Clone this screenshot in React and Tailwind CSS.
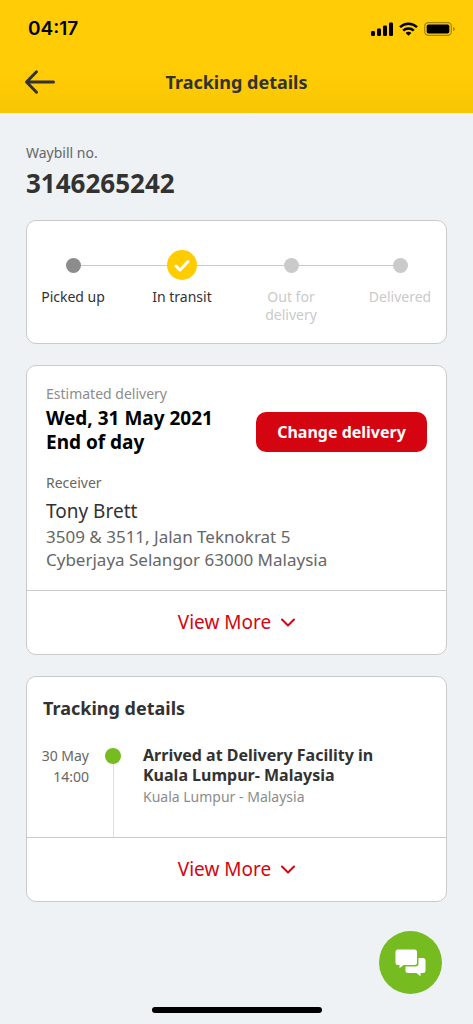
import { clsx } from 'clsx';

const steps = [
  { label: 'Picked up', state: 'done' },
  { label: 'In transit', state: 'current' },
  { label: 'Out for delivery', state: 'pending' },
  { label: 'Delivered', state: 'pending' },
];

const StatusBar = () => (
  <div className="flex h-[58px] items-center justify-between pl-7 pr-[18px] text-black">
    <span className="font-[Inter,sans-serif] text-[19px] font-semibold">04:17</span>
    <div className="flex items-center gap-1.5">
      <svg width="22" height="14" viewBox="0 0 22 14" fill="currentColor" aria-hidden="true">
        <rect x="0" y="9" width="4" height="5" rx="1.2" />
        <rect x="6" y="6.5" width="4" height="7.5" rx="1.2" />
        <rect x="12" y="3.5" width="4" height="10.5" rx="1.2" />
        <rect x="18" y="0.5" width="4" height="13.5" rx="1.2" />
      </svg>
      <svg width="19" height="14" viewBox="0 0 19 14" fill="none" stroke="currentColor" strokeWidth="2.5" aria-hidden="true">
        <path d="M1 5.1C5.8 0.5 13.2 0.5 18 5.1" />
        <path d="M4.2 8.7c3-2.8 7.6-2.8 10.6 0" />
        <path d="M6.6 10.9c1.6-1.5 4.2-1.5 5.8 0L9.5 13.8Z" fill="currentColor" stroke="none" />
      </svg>
      <svg width="31" height="14" viewBox="0 0 31 14" aria-hidden="true">
        <rect x="0.7" y="0.7" width="26.6" height="12.6" rx="3.6" fill="none" stroke="#000" strokeOpacity="0.35" strokeWidth="1.2" />
        <rect x="2.7" y="2.5" width="22.6" height="9" rx="1.8" fill="#000" />
        <path d="M29.2 5v4c1-.4 1.5-1.1 1.5-2s-.5-1.6-1.5-2Z" fill="#000" fillOpacity="0.4" />
      </svg>
    </div>
  </div>
);

const Header = () => (
  <header className="h-[113px] bg-linear-to-b from-[#ffcc05] from-60% to-[#f9c604]">
    <StatusBar />
    <div className="grid h-12 grid-cols-[32px_1fr_32px] items-center px-6">
      <button type="button" aria-label="Back" className="text-[#323232]">
        <svg width="32" height="26" viewBox="0 0 32 26" fill="none" stroke="currentColor" strokeWidth="3" strokeLinecap="round" strokeLinejoin="round">
          <path d="M29.5 13H2.5M12.5 2.8L2.5 13l10 10.2" />
        </svg>
      </button>
      <h1 className="text-center text-lg font-bold">Tracking details</h1>
    </div>
  </header>
);

const Card = ({ children }) => (
  <section className="overflow-hidden rounded-[10px] border border-[#cacaca] bg-white">{children}</section>
);

const ViewMore = () => (
  <button type="button" className="flex h-16 w-full items-center justify-center gap-2.5 border-t border-[#cacaca] text-[19px] text-[#d40511]">
    View More
    <svg width="14" height="9" viewBox="0 0 14 9" fill="none" stroke="currentColor" strokeWidth="2" strokeLinecap="round" strokeLinejoin="round" aria-hidden="true">
      <path d="M1 1.5l6 6 6-6" />
    </svg>
  </button>
);

const Step = ({ label, state }) => (
  <li className={clsx('relative flex w-16 flex-col items-center', state === 'pending' && 'text-[#cacaca]')}>
    <div className="flex h-[30px] items-center">
      {state === 'current' ? (
        <span className="flex size-[30px] items-center justify-center rounded-full bg-[#ffcc00]">
          <svg width="16" height="13" viewBox="0 0 16 13" fill="none" stroke="#fff" strokeWidth="3" strokeLinecap="round" strokeLinejoin="round" aria-hidden="true">
            <path d="M2 7.2l4 3.8 8-8.5" />
          </svg>
        </span>
      ) : (
        <span className={clsx('size-[15px] rounded-full', state === 'done' ? 'bg-[#8c8c8c]' : 'bg-[#cacaca]')} />
      )}
    </div>
    <span className="mt-2 text-center text-sm leading-[18px]">{label}</span>
  </li>
);

const Progress = () => (
  <Card>
    <ol className="relative flex min-h-[122px] justify-between px-3.5 pt-[29px]">
      <span aria-hidden="true" className="absolute left-12 right-12 top-11 h-px bg-[#cacaca]" />
      {steps.map((step) => (
        <Step key={step.label} {...step} />
      ))}
    </ol>
  </Card>
);

const Delivery = () => (
  <Card>
    <div className="px-[19px] pb-[19px] pt-[18px]">
      <p className="text-sm leading-5 text-[#8c8c8c]">Estimated delivery</p>
      <div className="flex items-start justify-between">
        <p className="mt-0.5 text-[19px] font-bold leading-6 text-black">
          Wed, 31 May 2021
          <br />
          End of day
        </p>
        <button type="button" className="mt-2 h-10 w-[171px] rounded-[10px] bg-[#d40511] text-base font-bold text-white">
          Change delivery
        </button>
      </div>
      <p className="mt-[19px] text-sm leading-5 text-[#666]">Receiver</p>
      <p className="mt-1 text-[19px] leading-7">Tony Brett</p>
      <address className="text-[17px] not-italic leading-[23px] text-[#666]">
        3509 &amp; 3511, Jalan Teknokrat 5
        <br />
        Cyberjaya Selangor 63000 Malaysia
      </address>
    </div>
    <ViewMore />
  </Card>
);

const TrackingDetails = () => (
  <Card>
    <h2 className="px-4 pt-[17px] text-lg font-bold leading-7">Tracking details</h2>
    <div className="mt-[23px] flex pl-3">
      <time className="w-[50px] text-right text-sm leading-[21px] text-[#666]">
        30 May
        <br />
        14:00
      </time>
      <div aria-hidden="true" className="ml-4 flex w-4 flex-col items-center">
        <span className="mt-[3px] size-4 rounded-full bg-[#76bc21]" />
        <span className="w-px flex-1 bg-[#dedede]" />
      </div>
      <div className="ml-[22px] pb-[30px]">
        <h3 className="text-base font-bold leading-5">
          Arrived at Delivery Facility in
          <br />
          Kuala Lumpur- Malaysia
        </h3>
        <p className="mt-0.5 text-sm leading-5 text-[#8c8c8c]">Kuala Lumpur - Malaysia</p>
      </div>
    </div>
    <ViewMore />
  </Card>
);

const ChatButton = () => (
  <button
    type="button"
    aria-label="Chat"
    className="fixed bottom-[30px] right-[31px] flex size-[63px] items-center justify-center rounded-full bg-[#76bc21] text-white"
  >
    <svg width="31" height="28" viewBox="0 0 31 28" fill="currentColor">
      <path d="M3 0.5H19.5a2.5 2.5 0 0 1 2.5 2.5V13.5a2.5 2.5 0 0 1-2.5 2.5H8.5L4.5 19.2V16H3a2.5 2.5 0 0 1-2.5-2.5V3A2.5 2.5 0 0 1 3 .5Z" />
      <path d="M23.5 9H28a2.5 2.5 0 0 1 2.5 2.5V21.5A2.5 2.5 0 0 1 28 24h-2.5v3.2L21.5 24H13a2.5 2.5 0 0 1-2.5-2.5V17.5H20.5a3 3 0 0 0 3-3Z" />
    </svg>
  </button>
);

const App = () => (
  <div className="flex min-h-screen flex-col bg-[#eef2f5] font-['Noto_Sans',sans-serif] text-[#323232]">
    <Header />
    <main className="flex flex-col gap-[21px] px-[26px] pt-[30px]">
      <div>
        <p className="text-sm leading-5 text-[#666]">Waybill no.</p>
        <p className="mt-1 text-[26px] font-bold leading-8">3146265242</p>
      </div>
      <Progress />
      <Delivery />
      <TrackingDetails />
    </main>
    <div className="mx-auto mb-[11px] mt-auto h-1.5 w-[170px] rounded-full bg-black" />
    <ChatButton />
  </div>
);

export default App;
